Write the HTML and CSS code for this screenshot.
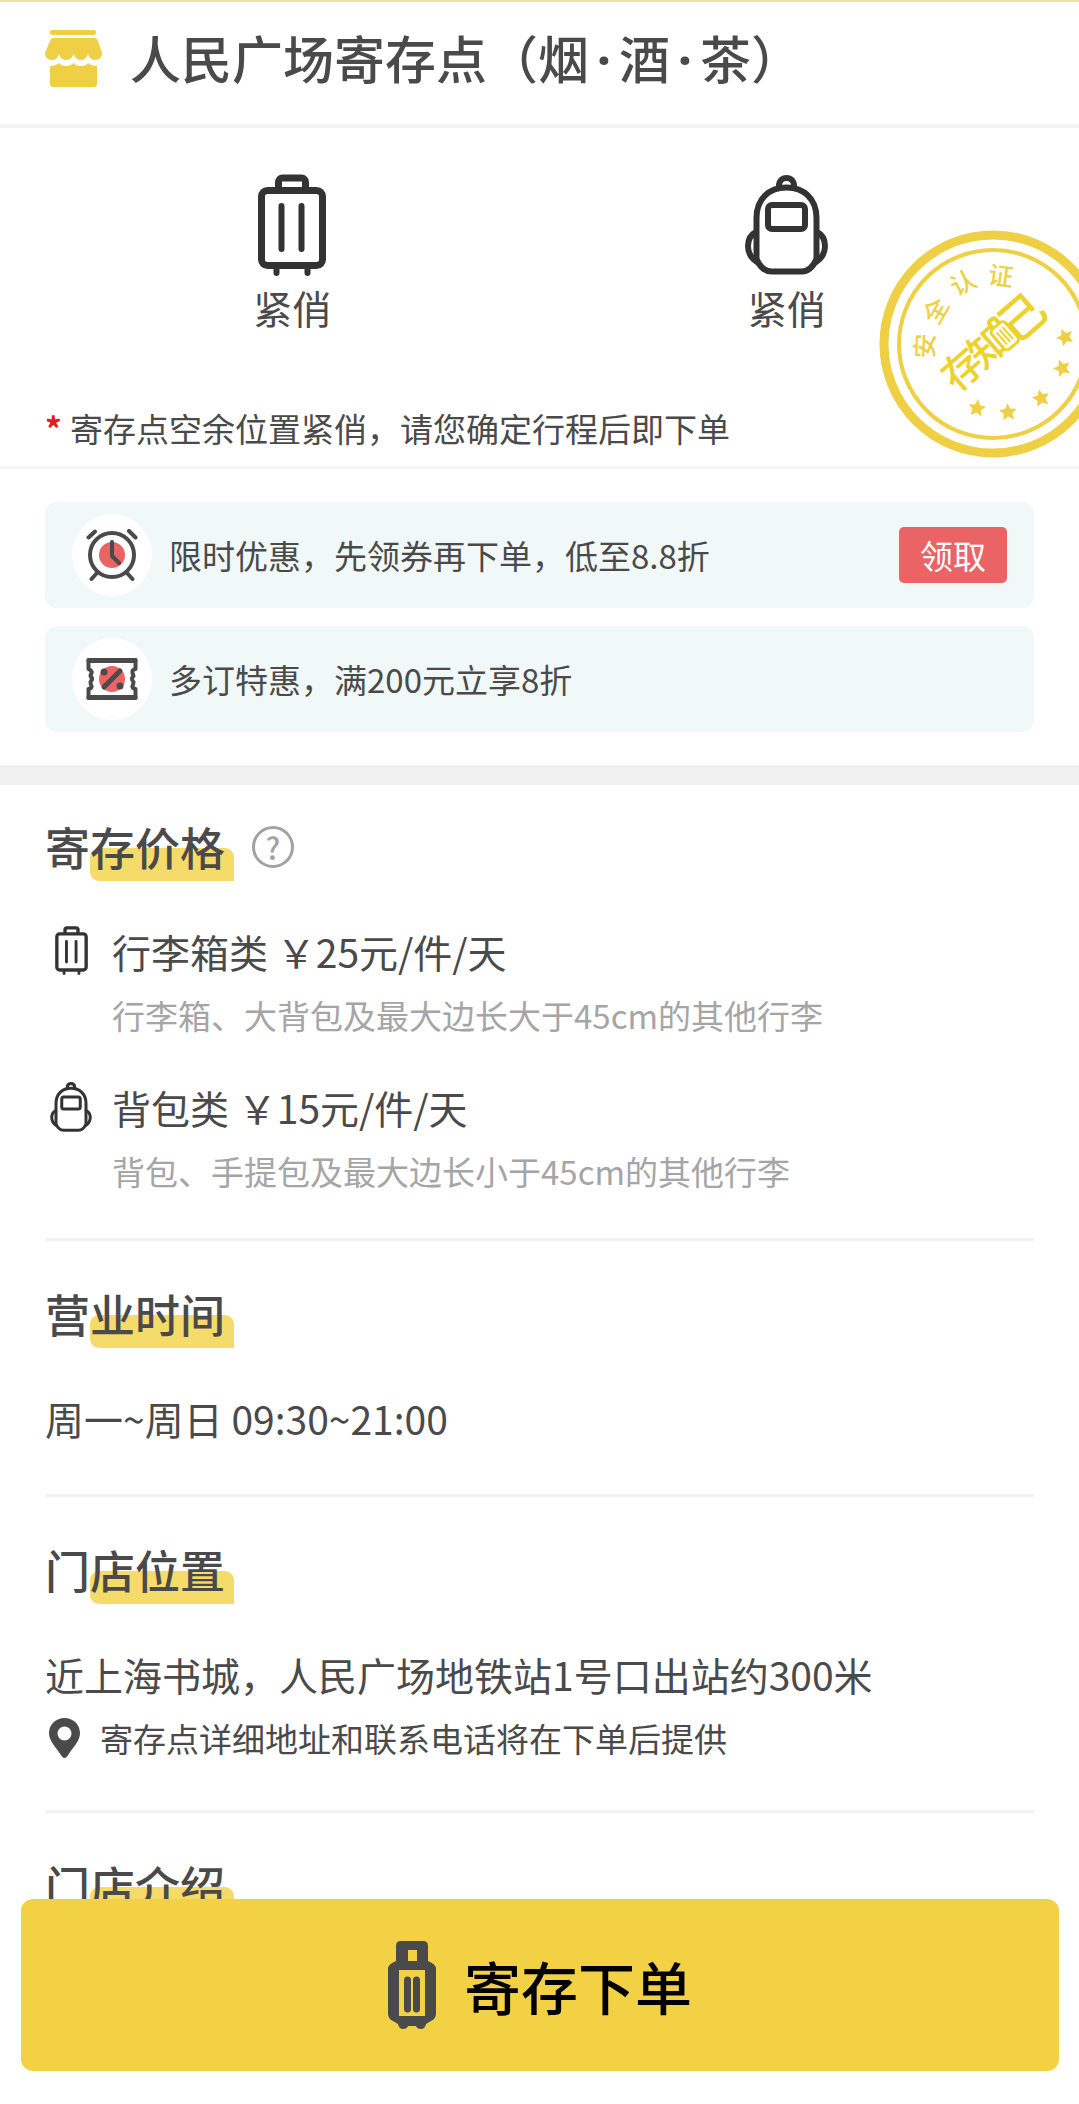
FILE: index.html
```html
<!DOCTYPE html>
<html lang="zh-CN">
<head>
<meta charset="utf-8">
<meta name="viewport" content="width=device-width, initial-scale=1">
<title>人民广场寄存点</title>
<link rel="stylesheet" href="styles.css">
</head>
<body>
<svg class="sprite" aria-hidden="true">
  <symbol id="suitcase" viewBox="0 0 68 102">
    <g fill="none" stroke="currentColor" stroke-width="7" stroke-linecap="round" stroke-linejoin="round">
      <rect x="3.500" y="16.500" width="61" height="75" rx="6"/>
      <path d="M20.500 14V8a4 4 0 0 1 4-4h19a4 4 0 0 1 4 4v6"/>
      <path d="M23.500 32v43M43.500 32v43" stroke-width="6"/>
      <path d="M18.500 95v4M49.500 95v4" stroke-width="6"/>
    </g>
  </symbol>
  <symbol id="backpack" viewBox="0 0 83 100">
    <g fill="none" stroke="currentColor" stroke-width="6" stroke-linecap="round" stroke-linejoin="round">
      <path d="M11.500 84V43C11.500 24 24 12.500 41.500 12.500S71.500 24 71.500 43v41c-3 7-8 12.500-15 12.500h-30c-7 0-12-5.500-15-12.500z"/>
      <path d="M34 11c0-5 3-8 7.500-8s7.500 3 7.500 8"/>
      <rect x="23" y="30" width="37" height="24" rx="4"/>
      <path d="M11 57C5 60 3 65 3 71s3 12 9 16M72 57c6 3 8 8 8 14s-3 12-9 16"/>
    </g>
  </symbol>
  <symbol id="star" viewBox="-10 -10 20 20">
    <path fill="currentColor" d="M0-9l2.600 5.800 6.200.6-4.600 4.200 1.300 6.200L0 4.600l-5.500 3.200 1.300-6.200-4.600-4.200 6.200-.6z"/>
  </symbol>
</svg>

<header class="store">
  <svg class="store-icon" viewBox="0 0 57 58" aria-hidden="true" fill="currentColor">
    <rect x="5" width="46" height="5" rx="2"/>
    <path d="M8 8h41q3 0 4 3l4 12q0 7-7 7-5 0-7-6-2 6-7 6t-7.500-6q-2 6-7.500 6t-7-6q-2 6-7 6-7 0-7-7L5 11q1-3 3-3z"/>
    <path d="M5 36q6 0 9-3 2 3 7 3t7.500-3q2 3 7.500 3t7-3q3 3 9 3v18q0 3-3 3H8q-3 0-3-3z"/>
  </svg>
  <h1 class="store-name">人民广场寄存点（烟<span class="dot">·</span>酒<span class="dot">·</span>茶）</h1>
</header>

<main>
  <section class="status">
    <ul class="status-list">
      <li class="status-item">
        <svg class="status-suitcase" aria-hidden="true"><use href="#suitcase"/></svg>
        <span>紧俏</span>
      </li>
      <li class="status-item">
        <svg class="status-backpack" aria-hidden="true"><use href="#backpack"/></svg>
        <span>紧俏</span>
      </li>
    </ul>
    <p class="notice"><span class="star">*</span><span>寄存点空余位置紧俏，请您确定行程后即下单</span></p>

    <svg class="stamp" viewBox="0 0 228 228" role="img" aria-label="安全认证 存知己">
      <circle cx="114" cy="114" r="109" fill="none" stroke="currentColor" stroke-width="9"/>
      <circle cx="114" cy="114" r="94" fill="none" stroke="currentColor" stroke-width="4"/>
      <g class="stamp-ring">
        <text transform="translate(46 116) rotate(-88)" y="9">安</text>
        <text transform="translate(57 81) rotate(-60)" y="9">全</text>
        <text transform="translate(84 53) rotate(-28)" y="9">认</text>
        <text transform="translate(122 46) rotate(8)" y="9">证</text>
      </g>
      <g transform="translate(114 112) rotate(-41)" class="stamp-name">
        <text x="-41" y="15">存</text>
        <text x="-6" y="15">知</text>
        <text x="38" y="17" class="stamp-last">己</text>
        <path d="M9-10v-5q0-3 3-3h2q3 0 3 3v5" fill="none" stroke="currentColor" stroke-width="4"/>
        <rect x="4" y="-10" width="18" height="26" rx="4" fill="#fff" stroke="currentColor" stroke-width="3"/>
        <path d="M9-5v16M13-5v16M17-5v16" stroke="currentColor" stroke-width="2"/>
      </g>
      <g>
        <use href="#star" width="20" height="20" transform="translate(98 178) rotate(8) translate(-10 -10)"/>
        <use href="#star" width="20" height="20" transform="translate(129 182) rotate(-4) translate(-10 -10)"/>
        <use href="#star" width="20" height="20" transform="translate(162 168) rotate(-14) translate(-10 -10)"/>
        <use href="#star" width="20" height="20" transform="translate(183 138) rotate(-20) translate(-10 -10)"/>
        <use href="#star" width="20" height="20" transform="translate(186 107) rotate(-24) translate(-10 -10)"/>
      </g>
    </svg>
  </section>

  <section class="offers">
    <div class="offer">
      <span class="offer-icon">
        <svg viewBox="0 0 52 52" width="52" height="52" aria-hidden="true">
          <circle cx="26" cy="26" r="13" fill="#ea6365"/>
          <g fill="none" stroke="#4a4a4a" stroke-width="4" stroke-linecap="round" stroke-linejoin="round">
            <circle cx="26" cy="26" r="22"/>
            <path d="M2.500 8.500L9 2.500M43 2l6.500 6.500M11 44l-5.500 6M41 44l5.500 6M26 13v14l7 7"/>
          </g>
        </svg>
      </span>
      <p class="offer-text">限时优惠，先领券再下单，低至8.8折</p>
      <button class="claim" type="button">领取</button>
    </div>
    <div class="offer">
      <span class="offer-icon">
        <svg viewBox="0 0 52 44" width="52" height="44" aria-hidden="true">
          <path d="M2.500 3h47v9q-4 1-3 4t1 3q-3 3 0 6 0 2-1 4t3 3v9h-47v-9q4-1 3-3t-1-4q3-3 0-6 0-1 1-3t-3-4z" fill="none" stroke="#4a4a4a" stroke-width="4" stroke-linejoin="round"/>
          <path d="M3 3.500h46M3 40.500h46" stroke="#4a4a4a" stroke-width="5" stroke-linecap="round"/>
          <circle cx="26" cy="22" r="13" fill="#ea6365"/>
          <path d="M18 30l16-16" stroke="#4a4a4a" stroke-width="5" stroke-linecap="round"/>
          <circle cx="18" cy="15" r="3.500" fill="#4a4a4a"/><circle cx="34" cy="29" r="3.500" fill="#4a4a4a"/>
        </svg>
      </span>
      <p class="offer-text">多订特惠，满200元立享8折</p>
    </div>
  </section>

  <section class="block block-price">
    <div class="block-head">
      <h2 class="block-title">寄存价格</h2>
      <button class="help" type="button" aria-label="价格说明">?</button>
    </div>
    <div class="price">
      <svg class="price-suitcase" aria-hidden="true"><use href="#suitcase"/></svg>
      <div>
        <h3 class="line">行李箱类 ￥25元/件/天</h3>
        <p class="desc">行李箱、大背包及最大边长大于45cm的其他行李</p>
      </div>
    </div>
    <div class="price">
      <svg class="price-backpack" aria-hidden="true"><use href="#backpack"/></svg>
      <div>
        <h3 class="line">背包类 ￥15元/件/天</h3>
        <p class="desc">背包、手提包及最大边长小于45cm的其他行李</p>
      </div>
    </div>
  </section>

  <section class="block">
    <div class="block-head"><h2 class="block-title">营业时间</h2></div>
    <p class="line">周一~周日 09:30~21:00</p>
  </section>

  <section class="block">
    <div class="block-head"><h2 class="block-title">门店位置</h2></div>
    <p class="line">近上海书城，人民广场地铁站1号口出站约300米</p>
    <p class="address">
      <svg viewBox="0 0 31 40" width="31" height="40" aria-hidden="true"><path fill="currentColor" fill-rule="evenodd" d="M15.500 0C7 0 0 6.500 0 15c0 8 7 14 12.500 23q3 4 6 0C24 29 31 23 31 15 31 6.500 24 0 15.500 0zm0 8.500a7 7 0 1 1 0 14 7 7 0 0 1 0-14z"/></svg>
      <span>寄存点详细地址和联系电话将在下单后提供</span>
    </p>
  </section>

  <section class="block">
    <div class="block-head"><h2 class="block-title">门店介绍</h2></div>
  </section>
</main>

<button class="order" type="button">
  <svg viewBox="0 0 48 88" width="48" height="88" aria-hidden="true">
    <path fill="#4a4a4a" fill-rule="evenodd" d="M13 0h22q5 0 5 5v15q8 3 8 8v44q0 6-5 8l-5 3q-1 5-5 5-4 0-5-3h-8q-1 3-5 3-4 0-5-5l-5-3q-5-2-5-8V28q0-5 8-8V5q0-5 5-5zm7 9v11h9V9zM11 29v46h26V29z"/>
    <path d="M19.500 39v29M28.500 39v29" stroke="#4a4a4a" stroke-width="7" stroke-linecap="round"/>
  </svg>
  <span>寄存下单</span>
</button>
</body>
</html>
```
FILE: styles.css
```css
* {
  box-sizing: border-box;
}

body,
h1,
h2,
h3,
p,
ul {
  margin: 0;
  padding: 0;
}

body {
  background: #fff;
  color: #4a4a4a;
  font-family: "Noto Sans CJK SC", sans-serif;
  font-size: 33px;
  line-height: 48px;
}

button {
  border: 0;
  padding: 0;
  font: inherit;
  cursor: pointer;
}

svg {
  display: block;
  flex: none;
}

.sprite {
  position: absolute;
  width: 0;
  height: 0;
}

.store {
  display: flex;
  align-items: center;
  gap: 28px;
  height: 128px;
  padding: 0 45px;
  border-top: 2px solid #f1e3a4;
  border-bottom: 4px solid #f3f3f3;
}

.store-icon {
  width: 57px;
  height: 58px;
  margin-bottom: 8px;
  color: #efd045;
}

.store-name {
  margin-bottom: 10px;
  font-size: 51px;
  font-weight: 500;
  line-height: 64px;
}

.dot {
  display: inline-block;
  width: 30px;
  font-family: "Noto Sans", sans-serif;
  font-weight: 700;
  text-align: center;
}

.status {
  position: relative;
  overflow: hidden;
  padding: 46px 45px 14px;
  border-bottom: 3px solid #f4f4f4;
}

.status-list {
  display: grid;
  grid-template-columns: 1fr 1fr;
  list-style: none;
}

.status-item {
  display: flex;
  flex-direction: column;
  align-items: center;
  gap: 3px;
  font-size: 39px;
  line-height: 56px;
}

.status-suitcase {
  width: 68px;
  height: 102px;
  color: #333;
}

.status-backpack {
  width: 83px;
  height: 102px;
  color: #333;
}

.notice {
  display: flex;
  gap: 8px;
  margin-top: 69px;
}

.star {
  width: 17px;
  color: #e02020;
  font-weight: 700;
}

.stamp {
  position: absolute;
  top: 102px;
  right: -28px;
  width: 228px;
  height: 228px;
  color: #efd045;
}

.stamp text {
  fill: currentColor;
  text-anchor: middle;
}

.stamp-ring {
  font-size: 25px;
  font-weight: 500;
}

.stamp-name {
  color: #ecd22b;
  font-size: 40px;
  font-weight: 500;
}

.stamp-last {
  font-size: 46px;
}

.offers {
  display: grid;
  gap: 18px;
  padding: 33px 45px;
  border-bottom: 20px solid #f0f0f0;
}

.offer {
  display: flex;
  align-items: center;
  min-height: 106px;
  padding: 12px 27px;
  border-radius: 12px;
  background: #f1f9f8;
}

.offer-icon {
  display: flex;
  flex: none;
  align-items: center;
  justify-content: center;
  width: 80px;
  height: 82px;
  border-radius: 50%;
  background: #fff;
}

.offer-text {
  flex: 1;
  margin-left: 17px;
}

.claim {
  width: 108px;
  height: 56px;
  border-radius: 5px;
  background: #ea6365;
  color: #fff;
}

.block {
  margin: 0 45px;
  padding: 43px 0 48px;
  border-bottom: 3px solid #f2f2f2;
}

.block-price {
  padding: 32px 0 43px;
}

.block:last-child {
  padding-bottom: 130px;
  border-bottom: 0;
}

.block-head {
  display: flex;
  align-items: center;
  gap: 18px;
  margin-bottom: 46px;
}

.block-title {
  position: relative;
  width: 189px;
  font-size: 45px;
  font-weight: 500;
  line-height: 60px;
}

.block-title::before {
  content: "";
  position: absolute;
  z-index: -1;
  right: 0;
  bottom: -4px;
  left: 45px;
  height: 33px;
  border-radius: 9px 9px 0 9px;
  background: #f5db69;
}

.help {
  width: 42px;
  height: 42px;
  border: 3px solid #a2a2a2;
  border-radius: 50%;
  background: none;
  color: #a2a2a2;
  font-size: 30px;
  font-weight: 500;
  line-height: 36px;
}

.price {
  display: grid;
  grid-template-columns: 52px 1fr;
  column-gap: 15px;
}

.price + .price {
  margin-top: 40px;
}

.price-suitcase {
  width: 33px;
  height: 49px;
  margin: 3px 0 0 10px;
  color: #333;
}

.price-backpack {
  width: 42px;
  height: 50px;
  margin: 3px 0 0 5px;
  color: #333;
}

.line {
  font-size: 39px;
  font-weight: 400;
  line-height: 56px;
}

.desc {
  margin-top: 12px;
  color: #a5a5a5;
}

.address {
  display: flex;
  align-items: center;
  gap: 20px;
  margin-top: 12px;
  padding-left: 4px;
}

.order {
  position: fixed;
  right: 20px;
  bottom: 33px;
  left: 21px;
  display: flex;
  align-items: center;
  justify-content: center;
  gap: 28px;
  height: 172px;
  border-radius: 12px;
  background: #f2d144;
  color: #000;
  font-size: 57px;
  font-weight: 500;
}
```
